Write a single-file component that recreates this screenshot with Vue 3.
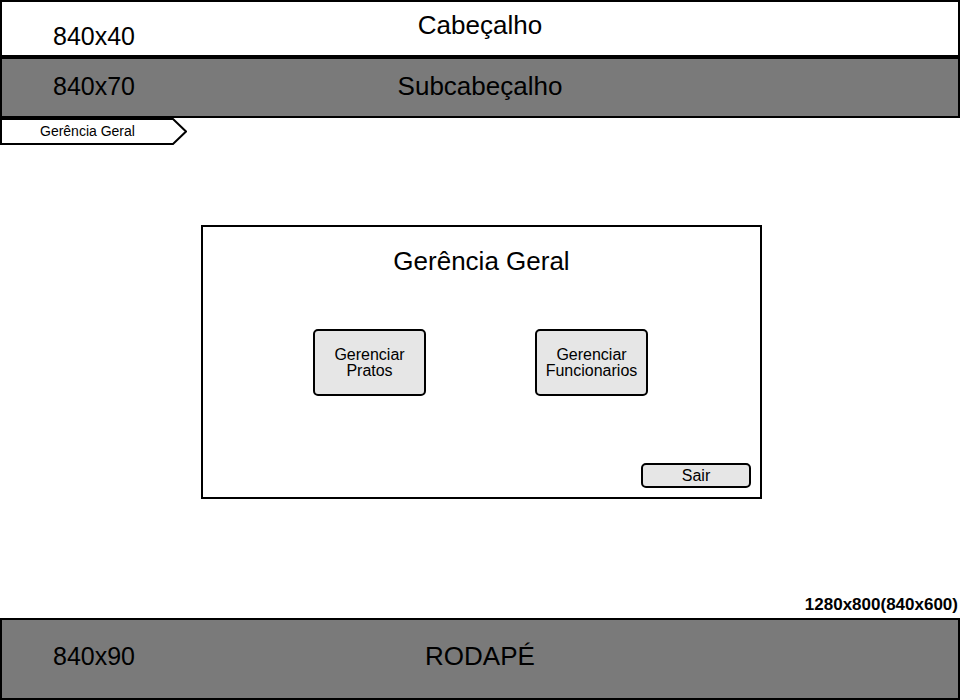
<script setup>
const actions = [
  { id: 'pratos', lines: ['Gerenciar', 'Pratos'] },
  { id: 'funcionarios', lines: ['Gerenciar', 'Funcionarios'] },
]
</script>

<template>
  <div class="page">
    <header class="band band-top">
      <span class="dims">840x40</span>
      <span class="name">Cabeçalho</span>
    </header>
    <div class="band band-sub">
      <span class="dims">840x70</span>
      <span class="name">Subcabeçalho</span>
    </div>

    <nav class="crumb">
      <span class="crumb-text">Gerência Geral</span>
      <svg class="crumb-tip" width="15" height="27" viewBox="0 0 15 27" aria-hidden="true">
        <path d="M0 1H1L14 13.5L1 26H0" fill="none" stroke="#000" stroke-width="2" />
      </svg>
    </nav>

    <main class="content">
      <section class="panel">
        <h1 class="title">Gerência Geral</h1>
        <div class="actions">
          <button v-for="a in actions" :key="a.id" type="button" class="btn action">
            <span v-for="line in a.lines" :key="line" class="line">{{ line }}</span>
          </button>
        </div>
        <button type="button" class="btn exit">Sair</button>
      </section>
    </main>
    <p class="resolution">1280x800(840x600)</p>

    <footer class="band band-foot">
      <span class="dims">840x90</span>
      <span class="name">RODAPÉ</span>
    </footer>
  </div>
</template>

<style>
body {
  margin: 0;
  background: #fff;
}
</style>

<style scoped>
.page {
  display: flex;
  flex-direction: column;
  min-height: 100vh;
  font-family: "Liberation Sans", Arial, sans-serif;
  color: #000;
}

.band {
  box-sizing: border-box;
  display: grid;
  grid-template-columns: 1fr auto 1fr;
  align-items: center;
  border: 2px solid #000;
  line-height: 30px;
}

.band-top {
  min-height: 57px;
  align-items: start;
  padding-top: 8px;
}

.band-top .dims {
  padding-top: 11px;
}

.band-sub {
  min-height: 61px;
  padding-bottom: 4px;
  background: #7a7a7a;
}

.band-foot {
  min-height: 82px;
  padding-bottom: 6px;
  background: #7a7a7a;
}

.dims {
  padding-left: 51px;
  font-size: 25px;
}

.name {
  font-size: 26px;
}

.crumb {
  display: flex;
  align-self: flex-start;
  height: 27px;
}

.crumb-text {
  box-sizing: border-box;
  min-width: 172px;
  padding: 0 34px 0 38px;
  border: 2px solid #000;
  border-right: 0;
  font-size: 14px;
  line-height: 23px;
}

.crumb-tip {
  display: block;
}

.content {
  flex: 1;
  display: flex;
  align-items: center;
  justify-content: center;
  padding-left: 3px;
}

.panel {
  box-sizing: border-box;
  display: flex;
  flex-direction: column;
  width: 100%;
  max-width: 561px;
  min-height: 274px;
  padding: 19px 9px 9px;
  border: 2px solid #000;
}

.title {
  margin: 0;
  font-size: 26px;
  font-weight: 400;
  line-height: 30px;
  text-align: center;
}

.actions {
  display: flex;
  justify-content: center;
  gap: 109px;
  margin: 53px 2px 0 0;
}

.btn {
  box-sizing: border-box;
  padding: 0;
  border: 2px solid #000;
  border-radius: 5px;
  background: #e6e6e6;
  color: #000;
  font-family: inherit;
  font-size: 16px;
  line-height: 16px;
}

.action {
  width: 113px;
  height: 67px;
}

.line {
  display: block;
}

.exit {
  align-self: flex-end;
  width: 110px;
  height: 25px;
  margin-top: auto;
}

.resolution {
  margin: 0;
  padding: 16px 2px 3px 0;
  font-size: 17px;
  font-weight: 700;
  line-height: 20px;
  text-align: right;
}
</style>
